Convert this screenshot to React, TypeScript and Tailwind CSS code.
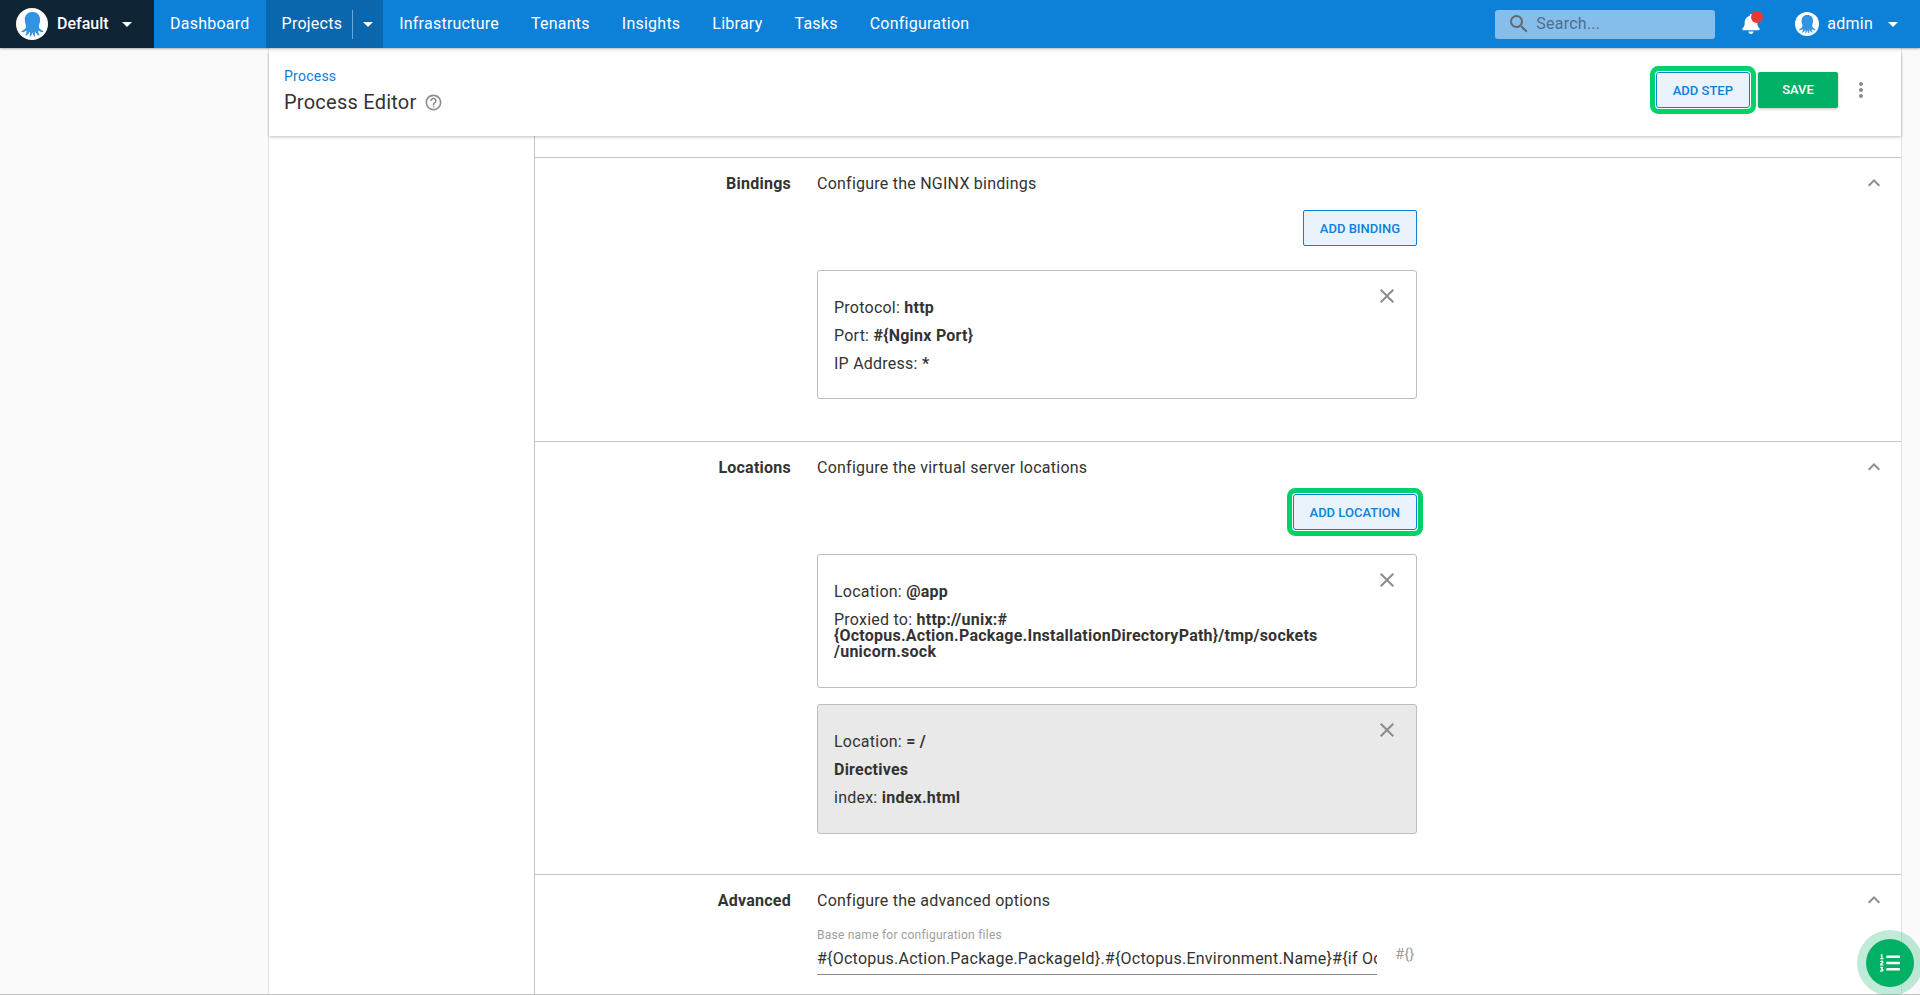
import { FaBell, FaListOl } from "react-icons/fa";
import {
  MdArrowDropDown,
  MdClose,
  MdExpandLess,
  MdHelpOutline,
  MdMoreVert,
  MdSearch,
} from "react-icons/md";
import type { ReactNode } from "react";

const navItems = ["Dashboard", "Projects", "Infrastructure", "Tenants", "Insights", "Library", "Tasks", "Configuration"];

function Octopus({ size }: { size: number }) {
  return (
    <svg width={size} height={size} viewBox="0 0 32 32" className="shrink-0">
      <circle cx="16" cy="16" r="16" fill="#fff" />
      <path
        fill="#3293e2"
        d="M16 4c-4.4 0-7.2 3.4-7.2 7.6 0 2.4.7 4.2 1.1 6.2.4 2-.6 3.6-4 5.2-.8.4-.3 1.3.5 1.2 1.9-.2 3.3-.9 4.2-1.7.3 1.5-.4 3-1.1 4.2-.3.6.3 1 .9.7 1.7-.9 2.9-2.5 3.4-4.1.4 1.6.4 3.2 0 4.7-.1.6.5.8.9.4 1.1-1.2 1.6-3 1.7-4.6.2 1.6.7 3.4 1.8 4.6.4.4 1 .2.9-.4-.4-1.5-.4-3.1 0-4.7.5 1.6 1.7 3.2 3.4 4.1.6.3 1.2-.1.9-.7-.7-1.2-1.4-2.7-1.1-4.2.9.8 2.3 1.5 4.2 1.7.8.1 1.3-.8.5-1.2-3.4-1.6-4.4-3.2-4-5.2.4-2 1.1-3.8 1.1-6.2 0-4.2-2.8-7.6-7.2-7.6z"
      />
    </svg>
  );
}

function OutlineButton({ label, focused }: { label: string; focused?: boolean }) {
  return (
    <button
      className={`h-9 px-[16px] pt-[2px] rounded-[2px] border border-[#0d80d8] text-[13px] font-medium tracking-normal text-[#0d80d8] bg-[#eaf3fb] ${
        focused ? "shadow-[0_0_0_1px_#fff,0_0_0_6px_#00d26a] rounded-[3px]" : ""
      }`}
    >
      {label}
    </button>
  );
}

function Card({ children, shaded, className }: { children: ReactNode; shaded?: boolean; className?: string }) {
  return (
    <div
      className={`relative w-[600px] border border-[#bdbdbd] rounded-[3px] pt-[23px] px-[16px] text-[16px] leading-[16px] text-[#333] ${
        shaded ? "bg-[#e9e9e9]" : "bg-white"
      } ${className ?? "pb-[21px]"}`}
    >
      {children}
      <MdClose size={24} className="absolute right-[17px] top-[13px] text-[#8c8c8c]" />
    </div>
  );
}

function Section({ label, description, children }: { label: string; description: string; children: ReactNode }) {
  return (
    <section className="relative border-t border-[#c4c4c4]">
      <div className="flex pt-[14px] text-[16px] leading-6">
        <div className="w-[256px] text-right font-bold text-[#333]">{label}</div>
        <div className="ml-[26px] text-[#333]">{description}</div>
      </div>
      <MdExpandLess size={24} className="absolute right-[15px] top-[13px] text-[#8c8c8c]" />
      <div className="ml-[282px] w-[600px]">{children}</div>
    </section>
  );
}

export default function App() {
  return (
    <div className="relative h-[995px] overflow-hidden bg-[#fafafa] font-['Roboto',sans-serif] tracking-[0.24px] flex flex-col">
      <header className="h-[48px] shrink-0 flex items-center bg-[#0d80d8] text-white text-[16px] shadow-[0_1px_2px_rgba(0,0,0,0.3)] z-10">
        <div className="h-full w-[154px] bg-[#0f2535] flex items-center pl-[16px]">
          <Octopus size={32} />
          <span className="ml-[9px] font-medium tracking-normal">Default</span>
          <MdArrowDropDown size={24} className="ml-[6px]" />
        </div>
        <nav className="flex h-full">
          {navItems.map((item) =>
            item === "Projects" ? (
              <div key={item} className="flex items-center h-full pl-[16px] bg-[#0a67ae]">
                {item}
                <span className="ml-[10px] w-px h-[29px] bg-[#6aa8d8]" />
                <MdArrowDropDown size={24} className="mx-[3px]" />
              </div>
            ) : (
              <div key={item} className="flex items-center h-full px-[16px]">
                {item}
              </div>
            )
          )}
        </nav>
        <div className="ml-auto flex items-center h-[29px] w-[220px] rounded-[3px] bg-[#86bdeb] pl-[13px] text-[#4d6f8c]">
          <MdSearch size={24} className="text-[#5f6a72] -ml-[1px]" />
          <span className="ml-[5px]">Search...</span>
        </div>
        <div className="relative ml-[26px] w-[20px]">
          <FaBell size={20} className="block" />
          <span className="absolute -top-[3px] left-[10px] w-[12px] h-[12px] rounded-full bg-[#e53935]" />
        </div>
        <div className="ml-[34px] flex items-center pr-[15px]">
          <Octopus size={24} />
          <span className="ml-[8px]">admin</span>
          <MdArrowDropDown size={24} className="ml-[8px]" />
        </div>
      </header>

      <div className="flex flex-1 min-h-0 border-b border-[#c4c4c4]">
        <div className="w-[268px] shrink-0" />
        <main className="w-[1634px] bg-white border-x border-[#e4e4e4] flex flex-col min-h-0">
          <div className="mt-[4px] h-[84px] shrink-0 bg-white shadow-[0_1px_3px_rgba(0,0,0,0.25)] flex items-start pl-[15px] pr-[28px] z-[1]">
            <div className="pt-[14px]">
              <div className="text-[14px] leading-[20px] text-[#0d80d8]">Process</div>
              <div className="mt-[2px] flex items-center text-[20px] leading-[28px] text-[#333]">
                Process Editor
                <MdHelpOutline size={19} className="ml-[7px] text-[#8c8c8c]" />
              </div>
            </div>
            <div className="ml-auto pt-[20px] flex items-center">
              <OutlineButton label="ADD STEP" focused />
              <button className="ml-[8px] h-9 w-[80px] rounded-[2px] bg-[#00b065] text-[13px] font-medium tracking-normal text-white shadow-[0_1px_3px_rgba(0,0,0,0.25)]">
                SAVE
              </button>
              <MdMoreVert size={24} className="ml-[11px] text-[#8c8c8c]" />
            </div>
          </div>
          <div className="flex flex-1 min-h-0">
            <div className="w-[266px] shrink-0 border-r border-[#c4c4c4]" />
            <div className="flex-1 pt-[21px]">
              <Section label="Bindings" description="Configure the NGINX bindings">
                <div className="mt-[14px] flex justify-end">
                  <OutlineButton label="ADD BINDING" />
                </div>
                <div className="mt-[24px] mb-[42px]">
                  <Card className="pb-[20px]">
                    <p className="my-[6px]">
                      Protocol: <b className="font-bold">http</b>
                    </p>
                    <p className="my-[12px]">
                      Port: <b className="font-bold">#{"{Nginx Port}"}</b>
                    </p>
                    <p className="my-[6px]">
                      IP Address: <b className="font-bold">*</b>
                    </p>
                  </Card>
                </div>
              </Section>
              <Section label="Locations" description="Configure the virtual server locations">
                <div className="mt-[14px] flex justify-end">
                  <OutlineButton label="ADD LOCATION" focused />
                </div>
                <div className="mt-[24px] mb-[40px] flex flex-col gap-[16px]">
                  <Card>
                    <p className="my-[6px]">
                      Location: <b className="font-bold">@app</b>
                    </p>
                    <p className="mt-[12px] mb-[6px]">
                      Proxied to:{" "}
                      <b className="font-bold">
                        http://unix:#
                        <br />
                        {"{Octopus.Action.Package.InstallationDirectoryPath}/tmp/sockets"}
                        <br />
                        /unicorn.sock
                      </b>
                    </p>
                  </Card>
                  <Card shaded>
                    <p className="my-[6px]">
                      Location: <b className="font-bold">= /</b>
                    </p>
                    <p className="my-[12px] font-bold">Directives</p>
                    <p className="my-[6px]">
                      index: <b className="font-bold">index.html</b>
                    </p>
                  </Card>
                </div>
              </Section>
              <Section label="Advanced" description="Configure the advanced options">
                <div className="relative mt-[15px] w-[560px]">
                  <div className="text-[12px] leading-[14px] text-[#9e9e9e]">Base name for configuration files</div>
                  <input
                    readOnly
                    value="#{Octopus.Action.Package.PackageId}.#{Octopus.Environment.Name}#{if Octopus.Deployment.Tenant}"
                    className="block w-full h-[33px] border-b border-[#8c8c8c] text-[16px] text-[#333] outline-none bg-transparent"
                  />
                  <span className="absolute left-[578px] top-[19px] whitespace-nowrap text-[15px] leading-[14px] tracking-normal text-[#9e9e9e]">
                    #{"{}"}
                  </span>
                </div>
              </Section>
            </div>
          </div>
        </main>
      </div>

      <div className="absolute left-[1857px] top-[930px] w-[66px] h-[66px] rounded-full bg-[#00b065]/25 flex items-center justify-center z-20">
        <div className="w-[48px] h-[48px] rounded-full bg-[#00b065] flex items-center justify-center text-white">
          <FaListOl size={20} />
        </div>
      </div>
    </div>
  );
}
